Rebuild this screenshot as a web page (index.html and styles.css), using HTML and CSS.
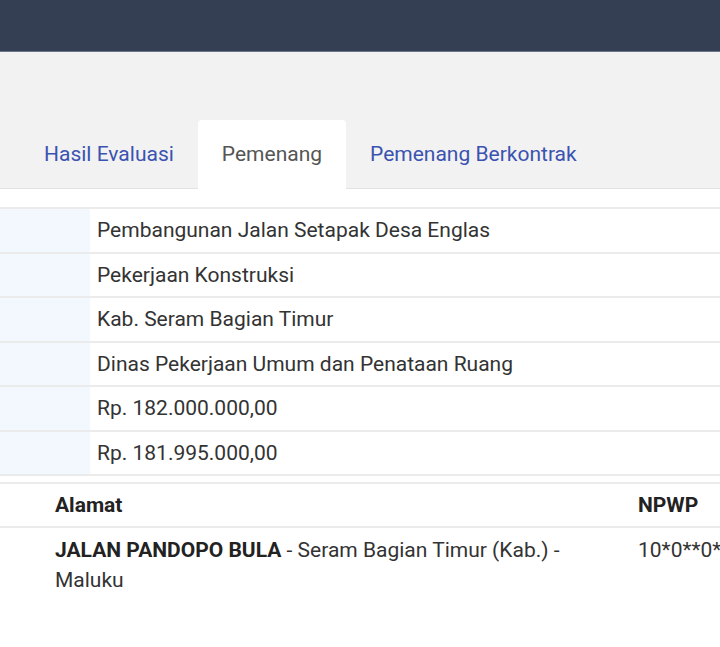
FILE: index.html
```html
<!DOCTYPE html>
<html>
<head>
<meta charset="utf-8">
<link rel="stylesheet" href="styles.css">
</head>
<body>
<header class="topbar"></header>
<section class="tabbar">
  <ul class="tabs">
    <li class="tab"><a>Hasil Evaluasi</a></li>
    <li class="tab active"><a>Pemenang</a></li>
    <li class="tab"><a>Pemenang Berkontrak</a></li>
  </ul>
</section>
<div class="content">
  <table class="info">
    <tr><th></th><td>Pembangunan Jalan Setapak Desa Englas</td></tr>
    <tr><th></th><td>Pekerjaan Konstruksi</td></tr>
    <tr><th></th><td>Kab. Seram Bagian Timur</td></tr>
    <tr><th></th><td>Dinas Pekerjaan Umum dan Penataan Ruang</td></tr>
    <tr><th></th><td>Rp. 182.000.000,00</td></tr>
    <tr><th></th><td>Rp. 181.995.000,00</td></tr>
  </table>
  <table class="winner">
    <thead>
      <tr><th class="addr">Alamat</th><th class="npwp">NPWP</th></tr>
    </thead>
    <tbody>
      <tr><td class="addr"><b>JALAN PANDOPO BULA</b> - Seram Bagian Timur (Kab.) - Maluku</td><td class="npwp">10*0**0*.*-***.000</td></tr>
    </tbody>
  </table>
</div>
</body>
</html>
```
FILE: styles.css
```css
html, body {
  margin: 0;
  padding: 0;
  background: #fff;
  overflow: hidden;
}
body {
  font-family: Roboto, "Liberation Sans", sans-serif;
  color: #333;
  width: 720px;
}
.topbar {
  height: 51px;
  background: #343f54;
  border-bottom: 1px solid #6b7689;
}
.tabbar {
  background: #f2f2f2;
  height: 136px;
  display: flex;
  align-items: flex-end;
  border-bottom: 1px solid #e3e3e3;
}
.tabs {
  list-style: none;
  margin: 0 0 -1px 0;
  padding: 0 0 0 21px;
  display: flex;
  white-space: nowrap;
}
.tab a {
  display: block;
  height: 68px;
  line-height: 68px;
  padding: 0 24px;
  font-size: 21px;
  color: #3b53b0;
  border-radius: 4px 4px 0 0;
}
.tab:first-child a {
  padding-left: 23px;
}
.tab.active a {
  background: #fff;
  color: #555;
  height: 69px;
}
.content {
  padding-top: 18px;
}
table {
  border-collapse: collapse;
  width: 100%;
}
.info tr {
  border-top: 2px solid #ebebeb;
  border-bottom: 2px solid #ebebeb;
}
.info th {
  width: 90px;
  background: #f2f8fd;
  padding: 0;
}
.info td {
  height: 42.5px;
  padding: 0 0 0 7px;
  font-size: 21px;
  color: #333;
  white-space: nowrap;
}
.winner {
  margin-top: 6px;
  border-top: 2px solid #ebebeb;
  table-layout: fixed;
}
.winner th {
  text-align: left;
  font-size: 21px;
  font-weight: bold;
  height: 42px;
  color: #222;
  border-bottom: 2px solid #ebebeb;
  padding: 0;
}
.winner .addr {
  padding-left: 55px;
  padding-right: 30px;
  width: 553px;
}
.winner .npwp {
  padding-left: 0;
  white-space: nowrap;
  overflow: hidden;
}
.winner td {
  vertical-align: top;
  font-size: 21px;
  line-height: 30px;
  padding-top: 7px;
  color: #333;
}
.winner td b {
  font-weight: bold;
  color: #222;
}
```
